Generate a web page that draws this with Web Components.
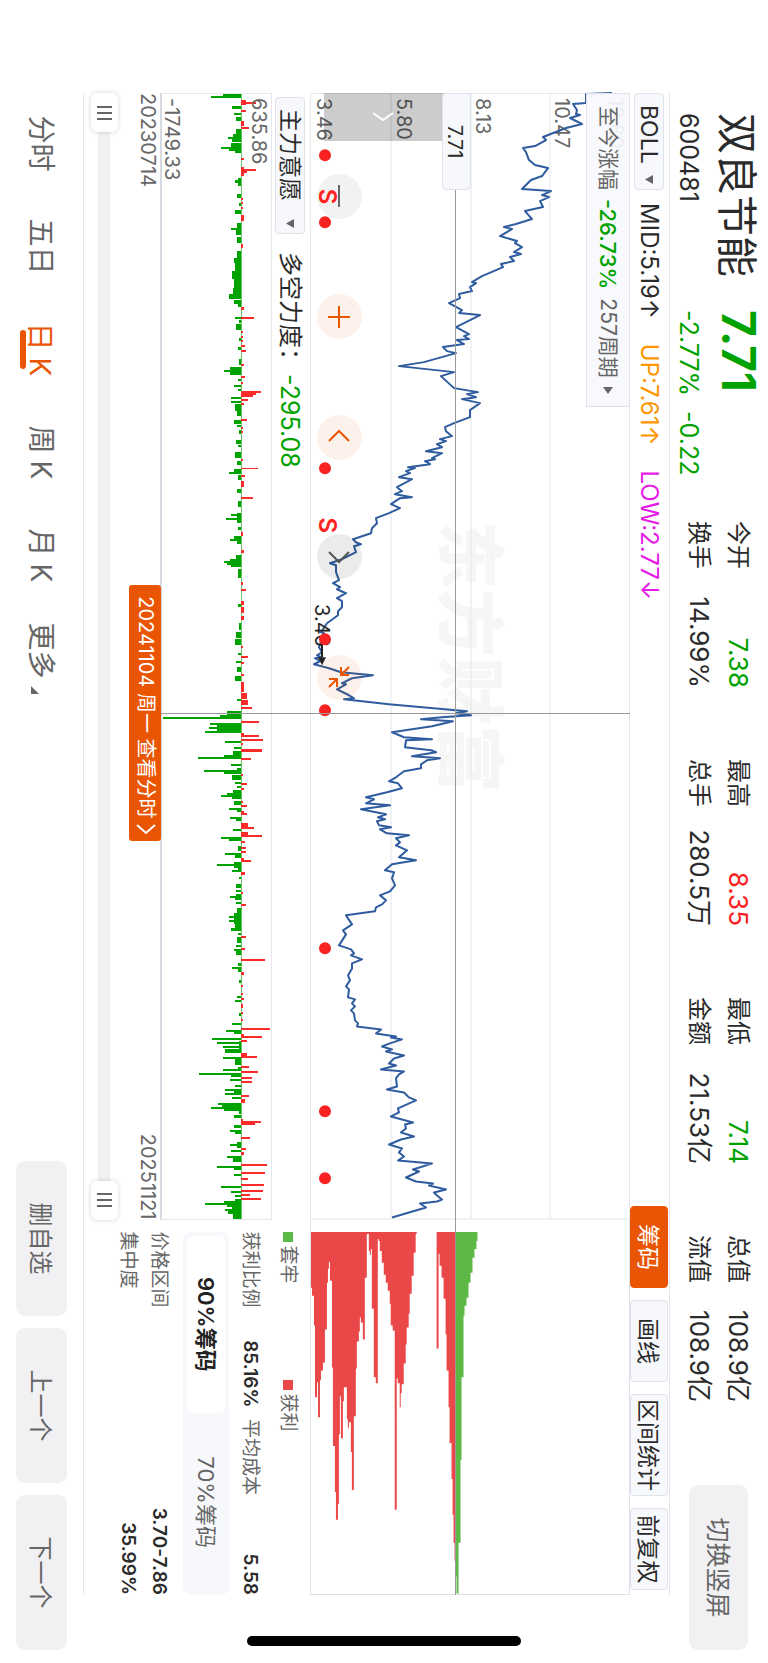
<!DOCTYPE html>
<html lang="zh-CN">
<head>
<meta charset="utf-8">
<meta name="viewport" content="width=device-width, initial-scale=1">
<title>双良节能 600481</title>
<style>
body {
    margin: 0;
    background: #fff;
    color: #2b2b2b;
    font-family: Inter, "Noto Sans CJK SC", sans-serif;
}
</style>
</head>
<body>
<stock-screen></stock-screen>

<script>
class BaseElement extends HTMLElement {

    constructor() {
        super();
        this.attachShadow({ mode: 'open' });
        this.shadowRoot.append(this.constructor.template.content.cloneNode(true));
    }

}

function define(name, html, cls = class extends BaseElement {}) {
    cls.template = document.createElement('template');
    cls.template.innerHTML = html;
    customElements.define(name, cls);
}

// Plain grey button used in the header and the footer
define('soft-button', `
<style>
:host { display: block; }
button {
    width: 100%;
    height: 100%;
    border: 0;
    border-radius: 9px;
    background: #f1f1f4;
    color: #666;
    font: inherit;
    padding: 0 0 3px;
}
</style>
<button type="button"><slot></slot></button>
`);

// Label on the left, value on the right
define('stat-item', `
<style>
:host {
    display: flex;
    justify-content: space-between;
    font-size: 24px;
    line-height: 28px;
    white-space: nowrap;
}
::slotted([slot="value"]) { font-size: 26px; }
</style>
<span><slot></slot></span>
<slot name="value"></slot>
`);

define('quote-header', `
<style>
:host {
    display: flex;
    align-items: flex-start;
    height: 98px;
    box-sizing: border-box;
    padding: 0 13px 0 113px;
    white-space: nowrap;
}
.brand {
    display: grid;
    grid-template-columns: 197px 211px;
    row-gap: 10px;
    padding-top: 7px;
    font-size: 25px;
    line-height: 28px;
}
h1 {
    margin: 0;
    font-size: 41px;
    font-weight: 400;
    line-height: 48px;
}
.price {
    font-size: 46px;
    font-weight: 700;
    line-height: 44px;
}
.change { display: flex; gap: 15px; }
.down { color: #00a200; }
.up { color: #fb2020; }
.stats {
    display: grid;
    grid-template-columns: repeat(4, 167px);
    gap: 11px 71px;
    padding-top: 16px;
}
soft-button {
    width: 165px;
    height: 59px;
    margin: 20px 0 0 auto;
    font-size: 25px;
}
</style>
<div class="brand">
    <h1>双良节能</h1>
    <span class="price down">7.71</span>
    <span>600481</span>
    <span class="change down"><span>-2.77%</span><span>-0.22</span></span>
</div>
<div class="stats">
    <stat-item>今开<span slot="value" class="down">7.38</span></stat-item>
    <stat-item>最高<span slot="value" class="up">8.35</span></stat-item>
    <stat-item>最低<span slot="value" class="down">7.14</span></stat-item>
    <stat-item>总值<span slot="value">108.9亿</span></stat-item>
    <stat-item>换手<span slot="value">14.99%</span></stat-item>
    <stat-item>总手<span slot="value">280.5万</span></stat-item>
    <stat-item>金额<span slot="value">21.53亿</span></stat-item>
    <stat-item>流值<span slot="value">108.9亿</span></stat-item>
</div>
<soft-button>切换竖屏</soft-button>
`);

// Drop-down with a small solid triangle; attributes: label, option
define('indicator-select', `
<style>
:host {
    display: grid;
    align-items: center;
    height: 30px;
    box-sizing: border-box;
    border: 1px solid #dfe2ea;
    border-radius: 4px;
    background: #f7f8fc;
    font-size: 23px;
}
select, svg { grid-area: 1 / 1; }
select {
    appearance: none;
    width: 100%;
    height: 28px;
    border: 0;
    padding: 0 0 0 11px;
    background: none;
    color: inherit;
    font: inherit;
}
svg { justify-self: end; margin-right: 5px; pointer-events: none; }
</style>
<select><option></option></select>
<svg width="9" height="8" viewBox="0 0 9 8"><path d="M0 0h9L4.5 8z" fill="#666"/></svg>
`, class extends BaseElement {

    connectedCallback() {
        const select = this.shadowRoot.querySelector('select');
        select.setAttribute('aria-label', this.getAttribute('label'));
        select.options[0].textContent = this.getAttribute('option');
    }

});

define('chart-toolbar', `
<style>
:host {
    display: flex;
    align-items: center;
    height: 40px;
    box-sizing: border-box;
    border-top: 1px solid #e4e6ec;
    font-size: 23px;
    white-space: nowrap;
}
indicator-select { width: 97px; margin-right: 13px; }
.values { display: flex; gap: 25px; flex: 1; font-size: 24px; }
.up { color: #ff9500; }
.low { color: #e61ce6; }
.tools { display: flex; gap: 12px; margin-right: 5px; }
button {
    height: 38px;
    min-width: 82px;
    border: 1px solid #dfe2ea;
    border-radius: 4px;
    padding: 0 4px 4px;
    background: #f7f8fc;
    color: inherit;
    font: inherit;
}
button[aria-pressed="true"] {
    border-color: #ea5504;
    background: #ea5504;
    color: #fff;
}
</style>
<indicator-select label="主图指标" option="BOLL"></indicator-select>
<div class="values">
    <span>MID:5.19↑</span>
    <span class="up">UP:7.61↑</span>
    <span class="low">LOW:2.77↓</span>
</div>
<div class="tools">
    <button type="button" aria-pressed="true">筹码</button>
    <button type="button">画线</button>
    <button type="button">区间统计</button>
    <button type="button">前复权</button>
</div>
`);

// Closing price, one "x,y" pair per turning point of the curve
const PRICE_LINE = `
0,17 1,43 10,43 11,56 17,52 21,53 22,49 25,59 31,47 35,63 44,86 47,83 53,94 55,106 59,103 67,100
72,94 75,81 83,87 87,98 96,107 98,78 102,87 104,80 108,89 114,86 118,104 126,97 131,113 134,125
136,117 143,129 148,112 150,114 154,107 159,115 161,108 164,119 168,115 171,128 174,126 183,147
189,157 190,153 194,159 198,157 201,170 205,169 210,180 217,167 220,170 222,149 234,173 241,160
243,165 246,160 247,172 251,165 254,186 258,182 260,173 269,205 273,230 279,175 283,188 295,175
299,151 301,162 304,153 306,167 310,149 317,159 324,159 330,175 334,184 338,183 343,177 346,189
348,183 351,192 354,187 358,203 360,187 365,197 366,194 368,204 371,199 374,221 375,214 378,223
380,219 384,230 386,217 394,232 398,227 401,234 404,217 405,229 411,238 415,229 420,240 425,253
430,252 435,257 440,258 446,276 449,273 451,268 453,275 459,273 462,279 466,287 470,299 472,293
479,293 487,290 490,296 494,289 496,292 500,283 505,292 508,287 514,287 518,291 522,291 530,302
539,308 540,305 554,310 559,307 562,312 564,308 565,314 568,309 571,315 575,300 579,288 582,256
585,277 590,287 591,283 596,292 602,280 605,275 606,285 611,240 618,162 620,173 622,158 624,187
626,208 628,176 633,197 639,237 644,225 646,197 647,223 654,224 657,198 659,193 663,217 665,189
667,202 671,208 675,208 678,225 684,233 688,240 690,231 695,227 699,242 704,263 706,255 710,263
712,239 716,268 721,243 724,251 726,244 728,252 732,250 734,238 736,249 740,242 742,220 745,233
749,229 752,233 757,222 764,230 767,213 771,237 777,244 779,235 785,237 792,234 798,239 802,249
807,243 811,247 814,253 818,254 822,283 831,277 837,286 841,283 852,290 856,278 860,275 862,278
866,267 870,277 875,277 882,281 887,279 893,283 896,280 904,281 906,274 910,277 913,274 917,278
920,275 927,274 930,271 933,272 936,248 940,253 943,233 944,238 946,227 950,239 953,247 956,237
958,243 962,225 965,235 970,240 972,233 976,248 978,225 981,230 985,233 993,232 996,242 999,225
1004,220 1007,213 1015,231 1019,230 1023,238 1029,216 1031,224 1035,223 1039,228 1043,215
1046,228 1051,240 1055,227 1059,230 1063,225 1067,231 1070,197 1076,216 1078,210 1084,223
1088,213 1090,196 1092,200 1096,183 1099,195 1102,192 1106,187 1108,192 1110,209 1114,203
1119,220 1124,237`;

define('price-chart', `
<style>
:host {
    display: block;
    position: relative;
    height: 320px;
    border: solid #e4e6ec;
    border-width: 1px 0;
    box-sizing: border-box;
    font-size: 20px;
    line-height: 24px;
}
svg.plot { display: block; position: relative; width: 100%; height: 100%; overflow: visible; }
.axis span, .cost, .fold, .zoom, .callout, .sign, .low, .watermark { position: absolute; }
.axis span { left: 5px; color: #666; }
.watermark {
    left: 38%;
    top: 125px;
    color: #f6f6f6;
    font-size: 68px;
    font-weight: 900;
    line-height: 68px;
}
.cost {
    left: 0;
    top: 158px;
    width: 97px;
    box-sizing: border-box;
    height: 29px;
    line-height: 30px;
    border: 1px solid #dfe2ea;
    border-radius: 4px;
    background: #f7f8fc;
    text-align: center;
}
.fold {
    left: 0;
    top: 186px;
    width: 48px;
    height: 119px;
    border: 0;
    padding: 0;
    background: rgba(0, 0, 0, .2);
}
.fold svg { display: block; margin: auto; }
.callout {
    left: 0;
    top: -1px;
    display: flex;
    align-items: center;
    gap: 9px;
    height: 44px;
    box-sizing: border-box;
    border: 1px solid #dfe2ea;
    padding: 0 12px;
    background: rgba(247, 248, 252, .92);
    color: #666;
    font: inherit;
    font-size: 21px;
    white-space: nowrap;
}
.callout b { color: #00a200; font-size: 22px; font-weight: 500; }
.zoom {
    top: 267px;
    width: 45px;
    height: 45px;
    margin-left: -22px;
    border: 0;
    border-radius: 50%;
    padding: 0;
    background: rgba(234, 85, 4, .08);
    color: #ea5504;
}
.zoom.off { background: rgba(0, 0, 0, .05); color: #666; }
.zoom.next { background: rgba(0, 0, 0, .08); color: #555; }
.zoom svg { display: block; margin: auto; }
.sign {
    top: 290px;
    margin-left: -8px;
    color: #f22;
    font-size: 24px;
    font-weight: 600;
}
.low { left: 511px; top: 295px; color: #222; }
.dots { position: absolute; left: 0; top: 298px; width: 100%; pointer-events: none; overflow: visible; }
</style>
<span class="watermark">东方财富</span>
<div class="axis">
    <span style="top: 1px">12.80</span>
    <span style="top: 55px">10.47</span>
    <span style="top: 134px">8.13</span>
    <span style="top: 213px">5.80</span>
    <span style="top: 293px">3.46</span>
</div>
<svg class="plot" viewBox="0 0 1126 318" preserveAspectRatio="none">
    <path d="M0 79h1126M0 158h1126M0 238h1126M.5 0v318M1125.5 0v318" stroke="#e4e6ec" stroke-width="1"/>
    <polyline points="${PRICE_LINE}" fill="none" stroke="#2f5c9e" stroke-width="2" stroke-linejoin="round"/>
    <path d="M551 307h13" stroke="#222" stroke-width="2"/>
    <path d="M564 303l8 4-8 4z" fill="#222"/>
</svg>
<span class="low">3.46</span>
<button class="callout" type="button">
    <span>至今涨幅</span><b>-26.73%</b><span>257周期</span>
    <svg width="7" height="10" viewBox="0 0 7 10"><path d="M0 0v10l7-5z" fill="#666"/></svg>
</button>
<button class="fold" type="button" aria-label="收起">
    <svg width="10" height="22" viewBox="0 0 10 22"><path d="M1 1l7 10-7 10" fill="none" stroke="#fff" stroke-width="2"/></svg>
</button>
<span class="cost">7.71</span>
<button class="zoom off" style="left: 9.1%" type="button" aria-label="缩小">
    <svg width="24" height="24" viewBox="0 0 24 24"><path d="M1 12h22" stroke="currentColor" stroke-width="2"/></svg>
</button>
<button class="zoom" style="left: 19.8%" type="button" aria-label="放大">
    <svg width="24" height="24" viewBox="0 0 24 24"><path d="M1 12h22M12 1v22" stroke="currentColor" stroke-width="2"/></svg>
</button>
<button class="zoom" style="left: 30.5%" type="button" aria-label="左移">
    <svg width="24" height="24" viewBox="0 0 24 24"><path d="M16 2L6 12l10 10" fill="none" stroke="currentColor" stroke-width="2"/></svg>
</button>
<button class="zoom next" style="left: 41.1%" type="button" aria-label="右移">
    <svg width="24" height="24" viewBox="0 0 24 24"><path d="M8 2l10 10L8 22" fill="none" stroke="currentColor" stroke-width="2"/></svg>
</button>
<button class="zoom" style="left: 51.8%" type="button" aria-label="还原">
    <svg width="24" height="24" viewBox="0 0 24 24"><path d="M2 2l8 8M10 2v8H2M22 22l-8-8M14 22v-8h8" fill="none" stroke="currentColor" stroke-width="2"/></svg>
</button>
<span class="sign" style="left: 9.2%">S</span>
<span class="sign" style="left: 38.4%">S</span>
<svg class="dots" viewBox="0 0 1126 12" fill="#f92222"></svg>
`, class extends BaseElement {

    connectedCallback() {
        this.shadowRoot.querySelector('.dots').innerHTML = [62, 129, 375, 546, 617, 855, 1018, 1085]
            .map(x => `<circle cx="${x}" cy="6" r="6"/>`).join('');
    }

});

// Force bars: x,width,height; a positive height rises above the zero line
const FORCE_BARS = `
0,2,-18 2,2,-31 12,3,-9 19,2,-7 23,4,-5 35,5,-5 40,3,-8 43,2,-13 45,3,-9 49,4,-10 53,2,-20 55,2,-12
57,2,-6 84,2,-3 86,3,-6 89,3,-3 100,4,-4 109,3,-2 116,4,-6 129,5,-4 134,2,-10 136,5,-5 143,6,-4
157,7,-4 164,5,-7 169,8,-6 177,8,-9 185,9,-7 194,6,-8 200,5,-12 206,4,-7 210,3,-3 223,2,-6 226,3,-2
230,6,-5 244,3,-2 253,3,-3 265,6,-2 273,3,-11 276,2,-17 278,3,-11 285,2,-3 291,2,-7 295,2,-3
303,2,-10 307,2,-10 310,7,-6 317,5,-4 326,4,-7 331,2,-4 336,4,-2 346,4,-5 351,2,-3 358,6,-6
367,4,-4 375,4,-7 379,2,-12 382,5,-3 396,4,-4 408,6,-3 420,10,-4 421,2,-10 425,2,-15 434,3,-3
443,3,-7 446,2,-11 448,3,-4 462,4,-5 466,2,-11 468,2,-17 470,2,-14 472,2,-10 476,9,-3 511,3,-3
530,7,-2 539,6,-5 546,6,-6 560,2,-3 568,2,-5 574,5,-4 583,5,-6 606,2,-4 618,4,-14 622,2,-21
624,2,-79 630,2,-32 632,2,-25 634,2,-33 636,2,-24 638,2,-37 648,2,-16 654,2,-7 658,4,-8 662,2,-17
664,2,-44 671,2,-10 675,2,-4 677,2,-38 679,2,-17 682,5,-9 689,2,-6 693,2,-4 697,3,-8 700,2,-14
702,2,-20 704,2,-9 708,4,-7 715,2,-12 717,2,-4 724,2,-11 726,2,-5 736,2,-8 744,2,-20 746,2,-12
753,5,-3 760,2,-16 762,3,-6 769,2,-7 771,2,-24 773,2,-7 775,2,-3 777,2,-9 784,2,-2 791,4,-5
797,2,-5 801,2,-5 803,2,-11 805,2,-6 809,2,-5 815,5,-4 820,11,-7 823,2,-12 827,2,-12 831,4,-6
835,3,-10 840,2,-3 844,6,-4 852,2,-5 856,2,-7 858,4,-5 870,3,-3 874,2,-9 876,3,-3 887,3,-2
903,2,-4 907,2,-6 920,3,-2 930,2,-9 937,2,-15 939,2,-7 945,2,-30 948,12,-2 949,2,-24 953,2,-18
956,4,-16 964,2,-18 966,6,-6 974,3,-3 976,2,-18 980,2,-43 982,2,-10 986,2,-11 992,2,-6 996,2,-16
998,2,-7 1000,2,-16 1004,2,-9 1010,2,-23 1012,2,-19 1014,2,-31 1016,2,-17 1018,3,-2 1022,3,-7
1032,3,-7 1037,2,-11 1039,2,-6 1049,2,-4 1051,2,-11 1053,2,-4 1057,2,-10 1063,2,-14 1065,4,-8
1073,2,-24 1075,2,-7 1081,2,-7 1093,2,-20 1098,2,-10 1102,2,-6 1106,2,-6 1108,2,-17 1110,2,-37
1112,2,-14 1114,2,-9 1116,2,-16 1118,3,-13 1121,5,-8
6,5,5 8,2,15 16,2,5 27,5,3 33,2,8 64,2,3 73,9,3 75,2,15 77,2,6 104,2,2 108,2,2 113,2,2 121,6,3
150,4,2 213,3,3 223,2,13 237,2,2 242,2,2 246,2,2 251,2,4 256,2,5 270,2,3 282,2,4 288,2,2 297,2,20
299,2,15 301,2,12 305,2,7 309,2,3 325,2,6 333,2,2 337,2,2 365,2,2 374,2,17 382,2,4 388,6,3
404,2,12 439,4,2 457,3,3 489,3,2 496,2,5 508,4,3 514,6,3 523,4,3 553,2,2 563,2,7 569,2,3 581,2,3
589,10,3 600,6,6 607,5,7 614,2,11 628,2,18 640,2,3 642,2,18 646,2,22 650,2,2 656,3,21 665,2,10
681,2,2 690,2,6 695,2,3 708,2,2 712,2,6 718,2,3 720,2,6 730,4,7 734,2,13 739,3,7 742,2,21
748,2,4 754,2,5 758,2,5 765,2,3 767,2,10 779,3,4 811,2,5 799,2,2 843,2,5 855,2,4 866,2,24 879,3,3
892,2,2 900,2,2 905,2,3 911,4,2 919,2,2 926,2,2 935,2,29 941,3,3 943,2,21 947,2,6 960,3,6
963,2,16 973,2,8 978,2,17 984,2,11 988,2,11 1002,2,8 1006,4,4 1026,2,2 1028,2,20 1030,2,14
1044,2,9 1055,2,5 1059,3,3 1071,2,26 1079,2,24 1085,2,7 1091,2,23 1097,2,22 1101,2,9 1105,2,20`;

define('force-chart', `
<style>
:host { display: block; font-size: 20px; line-height: 24px; color: #666; }
header {
    display: flex;
    align-items: center;
    height: 38px;
    box-sizing: border-box;
    padding: 2px 0 0 4px;
    color: #2b2b2b;
    font-size: 24px;
    white-space: nowrap;
}
indicator-select { width: 137px; margin-right: 18px; }
output { margin-left: 2px; color: #00a200; font-size: 25px; }
.plot {
    position: relative;
    height: 112px;
    box-sizing: border-box;
    border: 1px solid #e4e6ec;
    border-bottom: 2px solid #d8dae2;
}
.plot span { position: absolute; left: 4px; }
.top { top: 0; }
.bottom { bottom: -2px; }
svg { display: block; width: 100%; height: 100%; }
.dates { display: flex; justify-content: space-between; height: 42px; }
.tip {
    position: absolute;
    left: 50%;
    bottom: -33px;
    display: flex;
    align-items: center;
    justify-content: space-between;
    height: 32px;
    margin-left: -71px;
    width: 256px;
    box-sizing: border-box;
    border: 0;
    border-radius: 3px;
    padding: 0 6px 2px 11px;
    background: #ea5504;
    color: #fff;
    font: inherit;
    white-space: nowrap;
}
.tip svg { width: 12px; height: 20px; flex: none; }
</style>
<header>
    <indicator-select label="副图指标" option="主力意愿"></indicator-select>
    <label for="force">多空力度：</label><output id="force">-295.08</output>
</header>
<div class="plot">
    <span class="top">635.86</span>
    <span class="bottom">-1749.33</span>
    <svg class="bars" viewBox="0 0 1126 110" preserveAspectRatio="none" shape-rendering="crispEdges"></svg>
    <button class="tip" type="button">20241104 周一 查看分时
        <svg viewBox="0 0 12 20"><path d="M2 1l8 9-8 9" fill="none" stroke="#fff" stroke-width="2"/></svg>
    </button>
</div>
<div class="dates"><span>20230714</span><span>20251121</span></div>
`, class extends BaseElement {

    connectedCallback() {
        const zero = 30;
        const bars = FORCE_BARS.trim().split(/\s+/).map(item => item.split(',').map(Number));
        this.shadowRoot.querySelector('.bars').innerHTML =
            `<rect x="0" y="${zero - 1}" width="1126" height="1" fill="#00a200" opacity=".6"/>` +
            bars.map(([x, w, h]) => h > 0
                ? `<rect x="${x}" y="${zero - h}" width="${w}" height="${h}" fill="#f92c2c"/>`
                : `<rect x="${x}" y="${zero}" width="${w}" height="${-h}" fill="#00a200"/>`).join('');
    }

});

// Two-handled range under the charts
define('range-slider', `
<style>
:host {
    display: grid;
    align-items: center;
    height: 34px;
    padding-bottom: 7px;
    box-sizing: border-box;
}
:host::before { content: ""; grid-area: 1 / 1; height: 12px; background: #f1f1f4; }
input {
    grid-area: 1 / 1;
    appearance: none;
    width: 100%;
    height: 27px;
    margin: 0;
    background: none;
    pointer-events: none;
}
input::-webkit-slider-thumb {
    appearance: none;
    width: 39px;
    height: 27px;
    border-radius: 6px;
    background:
        linear-gradient(90deg, #666 2px, transparent 2px 6px, #666 6px 8px, transparent 8px 12px, #666 12px)
        center / 14px 15px no-repeat #fff;
    box-shadow: 0 0 5px rgba(0, 0, 0, .18);
    pointer-events: auto;
}
</style>
<input type="range" value="0" aria-label="开始日期">
<input type="range" value="100" aria-label="结束日期">
`);

define('chip-panel', `
<style>
:host { display: block; font-size: 19px; line-height: 24px; color: #666; white-space: nowrap; }
.plot {
    height: 320px;
    box-sizing: border-box;
    border: solid #dde0e8;
    border-width: 1px 1px 1px 0;
}
.plot svg { display: block; width: 100%; height: 100%; }
.body { padding-left: 12px; }
.legend { display: grid; grid-template-columns: 148px 1fr; height: 44px; align-items: center; }
.legend span { display: flex; align-items: center; gap: 4px; }
.legend i { width: 10px; height: 10px; background: #5cb946; }
.legend .win { background: #ea4848; }
b { color: #2b2b2b; font-weight: 600; }
.row { display: flex; justify-content: space-between; height: 31px; align-items: center; }
.row.first { height: 32px; padding-bottom: 5px; }
.pair { display: flex; justify-content: space-between; width: 176px; }
.tabs {
    display: flex;
    height: 46px;
    box-sizing: border-box;
    border-radius: 8px;
    padding: 4px;
    margin-bottom: 8px;
    background: #f7f8fc;
}
.tabs button {
    flex: 1;
    border: 0;
    border-radius: 6px;
    padding: 0;
    background: none;
    color: inherit;
    font: inherit;
    font-size: 22px;
}
.tabs [aria-selected="true"] { background: #fff; color: #222; font-weight: 600; }
</style>
<div class="plot">
    <svg viewBox="0 0 376 319" preserveAspectRatio="none">
        <path fill="#ea4848" d="M12 319H68V318H76V316H106V315H178V313H163V312H198V310H161V309H151V307H143V305H110V303H63V302H49V301H42V300H61V298H148V297H227V295H273V294H301V292H285V291H215V290H177V289H219V287H182V286H168V283H200V282H209V281H203V279H233V278H271V276H197V274H149V273H122V271H112V270H98V269H103V267H120V265H58V263H14V261H31V260H35V259H29V258H89V256H158V254H164V252H19V251H21V250H31V248H43V246H55V244H63V242H71V240H84V239H106V237H111V235H121V235H291V233H159V232H164V230H188V229H174V228H165V226H144V224H125V223H108V221H94V220H74V218H56V216H33V214H14V213H12Z"/>
        <path fill="#ea4848" d="M12 193H129V191H34V190H46V188H58V186H79V184H115V183H151V181H188V180H224V178H260V177H296V176H324V175H342V174H12Z"/>
        <path fill="#5cb946" d="M12 174H358V173H375V171H324V169H241V168H158V166H96V165H86V163H78V161H63V159H53V157H38V155H29V153H21V152H12Z"/>
    </svg>
</div>
<div class="body">
    <div class="legend"><span><i></i>套牢</span><span><i class="win"></i>获利</span></div>
    <div class="row first">
        <span class="pair"><span>获利比例</span><b>85.16%</b></span>
        <span class="pair"><span>平均成本</span><b>5.58</b></span>
    </div>
    <div class="tabs" role="tablist">
        <button type="button" role="tab" aria-selected="true">90%筹码</button>
        <button type="button" role="tab" aria-selected="false">70%筹码</button>
    </div>
    <div class="row"><span>价格区间</span><b>3.70-7.86</b></div>
    <div class="row"><span>集中度</span><b>35.99%</b></div>
</div>
`);

define('period-footer', `
<style>
:host {
    display: flex;
    align-items: flex-start;
    padding: 0 13px 0 92px;
    white-space: nowrap;
}
nav { display: flex; flex: 1; }
.tab {
    width: 103px;
    height: 64px;
    border: 0;
    padding: 19px 0 0;
    background: none;
    color: #666;
    font: inherit;
    font-size: 28px;
    line-height: 44px;
}
.tab span { margin-left: 7px; }
.tab[aria-current] { color: #ea5504; }
.tab[aria-current]::after {
    content: "";
    display: block;
    width: 39px;
    height: 6px;
    margin: -8px auto 0;
    border-radius: 3px;
    background: #ea5504;
}
.actions { display: flex; gap: 12px; padding-top: 16px; }
soft-button { width: 155px; height: 51px; font-size: 24px; }
</style>
<nav>
    <button class="tab" type="button">分时</button>
    <button class="tab" type="button">五日</button>
    <button class="tab" type="button" aria-current="true">日<span>K</span></button>
    <button class="tab" type="button">周<span>K</span></button>
    <button class="tab" type="button">月<span>K</span></button>
    <button class="tab" type="button">更多 <svg width="8" height="8" viewBox="0 0 8 8"><path d="M8 0v8H0z" fill="#666"/></svg></button>
</nav>
<div class="actions">
    <soft-button>删自选</soft-button>
    <soft-button>上一个</soft-button>
    <soft-button>下一个</soft-button>
</div>
`);

// The screen is laid out in landscape and turned a quarter clockwise for a portrait window
define('stock-screen', `
<style>
:host { display: block; width: 100vw; height: 100vh; overflow: hidden; }
.stage {
    position: relative;
    display: flex;
    flex-direction: column;
    width: 100vh;
    height: 100vw;
    transform-origin: 0 0;
    transform: rotate(90deg) translateY(-100%);
}
main {
    margin: 0 68px 0 93px;
    border-bottom: 1px solid #e4e6ec;
}
.columns { position: relative; display: grid; grid-template-columns: 3fr 1fr; }
.cross { position: absolute; background: #999; pointer-events: none; }
.cross.h { left: 97px; right: 0; top: 174px; height: 1px; }
.cross.v { left: 620px; top: 0; width: 1px; height: 469px; }
.home {
    position: absolute;
    right: 17px;
    top: 247px;
    bottom: 247px;
    width: 10px;
    border-radius: 5px;
    background: #000;
}
</style>
<div class="stage">
    <quote-header></quote-header>
    <main>
        <chart-toolbar></chart-toolbar>
        <div class="columns">
            <div>
                <price-chart></price-chart>
                <force-chart></force-chart>
                <range-slider></range-slider>
            </div>
            <chip-panel></chip-panel>
            <div class="cross h"></div>
            <div class="cross v"></div>
        </div>
    </main>
    <period-footer></period-footer>
    <div class="home"></div>
</div>
`);
</script>
</body>
</html>
